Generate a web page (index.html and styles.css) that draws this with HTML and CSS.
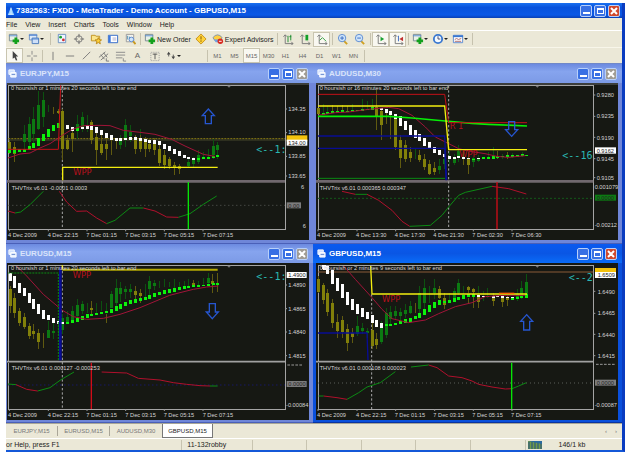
FILE: index.html
```html
<!DOCTYPE html>
<html lang="en">
<head>
<meta charset="utf-8">
<title>MetaTrader</title>
<link rel="stylesheet" href="styles.css">
</head>
<body>
<svg class="defs" aria-hidden="true">
  <symbol id="i-docplus" viewBox="0 0 13 13"><path d="M1.500 1.500h8v7h-8z" fill="#e8f0e8" stroke="#7a8a90"/><path d="M1 3h9" stroke="#5a8fd0"/><path d="M8.500 5v7M5 8.500h7" stroke="#13a01c" stroke-width="3"/></symbol>
  <symbol id="i-stack" viewBox="0 0 13 13"><path d="M1.500 1.500h8v6h-8z" fill="#dce8f8" stroke="#6a90c8"/><path d="M4.500 5.500h7v6h-7z" fill="#cfe0f8" stroke="#4a78b8"/><path d="M1 2.500h9M4 6.500h8" stroke="#4a80d0"/></symbol>
  <symbol id="i-cross" viewBox="0 0 13 13"><circle cx="6.500" cy="6.500" r="3.500" fill="none" stroke="#777"/><path d="M6.500 1v4M6.500 8v4M1 6.500h4M8 6.500h4" stroke="#666"/></symbol>
  <symbol id="i-win" viewBox="0 0 10 10"><path d="M1 1h6v5H1z" fill="#cfe0ff" stroke="#fff"/><path d="M3 4h6v5H3z" fill="#e8f0ff" stroke="#fff"/><path d="M4 6h4" stroke="#5a80c8"/></symbol>
  <symbol id="i-axes" viewBox="0 0 13 13"><path d="M3.500 2v9.500H12M1.500 4l2-2 2 2M10 9.500l2 2-2 1.500" fill="none" stroke="#777"/></symbol>
  <symbol id="i-lens" viewBox="0 0 13 13"><path d="M7 8l4 4" stroke="#d0a020" stroke-width="2"/><circle cx="5.500" cy="5.500" r="4" fill="#cfe4fa" stroke="#5a8ad0"/><path d="M3.500 5.500h4" stroke="#3568c0"/></symbol>
</svg>
<div class="app">
  <header class="titlebar">
    <svg class="logo" viewBox="0 0 10 12"><path d="M1 11L5 1l4 10z" fill="#8ecbff"/><path d="M5 2v8M2 10h6" stroke="#e8f6ff"/></svg>
    <h1>7382563: FXDD - MetaTrader - Demo Account - GBPUSD,M15</h1>
    <div class="controls">
      <button class="ctl" aria-label="Minimize"><i class="min"></i></button>
      <button class="ctl" aria-label="Maximize"><i class="max"></i></button>
      <button class="ctl close" aria-label="Close"><svg viewBox="0 0 8 8"><path d="M1 1l6 6M7 1L1 7"/></svg></button>
    </div>
  </header>
  <nav class="menu"><button>File</button><button>View</button><button>Insert</button><button>Charts</button><button>Tools</button><button>Window</button><button>Help</button></nav>
  <div class="bar main">
    <button class="tool drop" aria-label="New chart"><svg><use href="#i-docplus"/></svg></button>
    <button class="tool drop" aria-label="Profiles"><svg><use href="#i-stack"/></svg></button>
    <span class="sep wide"></span>
    <button class="tool" aria-label="Market watch"><svg viewBox="0 0 13 13"><path d="M2.500 1.500h8v9h-8z" fill="#eef4ff" stroke="#6a90c0"/><circle cx="5" cy="4.500" r="1.500" fill="#18a030"/><circle cx="8" cy="7.500" r="1.500" fill="#d03030"/></svg></button>
    <button class="tool" aria-label="Data window"><svg><use href="#i-cross"/></svg></button>
    <button class="tool" aria-label="Navigator"><svg viewBox="0 0 13 13"><path d="M1.500 2.500h4l1 1h4v5h-9z" fill="#fbe58a" stroke="#c09020"/><path d="M9 5l1 2.300 2.500.2-2 1.700.7 2.500L9 10.300 6.800 11.700l.7-2.500-2-1.700L8 7.300z" fill="#ffd23a" stroke="#b88718"/></svg></button>
    <button class="tool" aria-label="Terminal"><svg viewBox="0 0 13 13"><path d="M1.500 2.500h10v8h-10z" fill="#fff" stroke="#2c66c8"/><path d="M3 3v7" stroke="#3a78e0" stroke-width="2"/><path d="M6 5.500h4M6 7.500h4" stroke="#aac"/></svg></button>
    <button class="tool" aria-label="Strategy tester"><svg viewBox="0 0 13 13"><path d="M2.500 1.500h8v8h-8z" fill="#f4f4ee" stroke="#999"/><path d="M4 3v4M6 4v4" stroke="#48a"/><circle cx="8" cy="7" r="2.500" fill="#cfe4fa" stroke="#5a8ad0"/><path d="M10 9l2.500 3" stroke="#c89a20" stroke-width="2"/></svg></button>
    <span class="sep"></span>
    <button class="tool label"><svg><use href="#i-docplus"/></svg>New Order</button>
    <button class="tool" aria-label="MetaEditor"><svg viewBox="0 0 13 13"><path d="M6.500 1L12 6.500 6.500 12 1 6.500z" fill="#ffd23a" stroke="#c8921a"/><path d="M6.500 3.500V7M6.500 8v1.500" stroke="#7a5200"/></svg></button>
    <button class="tool label"><svg viewBox="0 0 13 13"><path d="M1 5q5-6 10 0l-2 3H3z" fill="#ffcf3f" stroke="#7a90b0"/><path d="M2 7h8v3H4z" fill="#6fa0e0"/><circle cx="9" cy="9" r="3" fill="#d82a20"/><path d="M7.500 9h3" stroke="#fff"/></svg>Expert Advisors</button>
    <span class="sep"></span>
    <button class="tool" aria-label="Bar chart"><svg viewBox="0 0 13 13"><use href="#i-axes"/><path d="M6.500 3v7M9.500 2v6M8 4h2" stroke="#188a2a"/></svg></button>
    <button class="tool" aria-label="Candlesticks"><svg viewBox="0 0 13 13"><use href="#i-axes"/><path d="M7 2h3v6H7z" fill="#12a028"/></svg></button>
    <button class="tool on" aria-label="Line chart"><svg viewBox="0 0 13 13"><use href="#i-axes"/><path d="M4 8l3-3 4 4" fill="none" stroke="#2a9a3a"/></svg></button>
    <span class="sep"></span>
    <button class="tool" aria-label="Zoom in"><svg viewBox="0 0 13 13"><use href="#i-lens"/><path d="M5.500 3.500v4" stroke="#3568c0"/></svg></button>
    <button class="tool" aria-label="Zoom out"><svg><use href="#i-lens"/></svg></button>
    <span class="sep"></span>
    <button class="tool on" aria-label="Auto scroll"><svg viewBox="0 0 13 13"><use href="#i-axes"/><path d="M6 4l4 2.500L6 9z" fill="#18a030"/></svg></button>
    <button class="tool on" aria-label="Chart shift"><svg viewBox="0 0 13 13"><use href="#i-axes"/><path d="M7 3v6" stroke="#3568c0"/><path d="M12 4L8 6.500 12 9z" fill="#c03030"/></svg></button>
    <span class="sep"></span>
    <button class="tool drop" aria-label="Indicators"><svg><use href="#i-docplus"/></svg></button>
    <button class="tool drop" aria-label="Periods"><svg viewBox="0 0 13 13"><circle cx="6.500" cy="6.500" r="4.500" fill="#f4faff" stroke="#3a78d0" stroke-width="2"/><path d="M6.500 3.500v3h2.500" fill="none" stroke="#446"/></svg></button>
    <button class="tool drop" aria-label="Templates"><svg viewBox="0 0 13 13"><path d="M1.500 2.500h10v8h-10z" fill="#fff" stroke="#5a8ad0"/><path d="M1 3.500h11" stroke="#3a78d0" stroke-width="2"/><path d="M3 7l2-1 2 1 3-1M3 9h7" fill="none" stroke="#a66"/></svg></button>
    <span class="sep"></span>
  </div>
  <div class="bar small">
    <button class="tool on" aria-label="Cursor"><svg viewBox="0 0 13 13"><path d="M4 1l6 6H7.500L9 11l-1.500.5L6 8 4 9.500z" fill="#444"/></svg></button>
    <button class="tool" aria-label="Crosshair"><svg viewBox="0 0 13 13"><path d="M6.500 1v4M6.500 8v4M1 6.500h4M8 6.500h4" stroke="#888"/></svg></button>
    <span class="sep"></span>
    <button class="tool" aria-label="Vertical line"><svg viewBox="0 0 13 13"><path d="M6.500 2v9" stroke="#777"/></svg></button>
    <button class="tool" aria-label="Horizontal line"><svg viewBox="0 0 13 13"><path d="M2 6.500h9" stroke="#777"/></svg></button>
    <button class="tool" aria-label="Trendline"><svg viewBox="0 0 13 13"><path d="M2 10l8-8" stroke="#777"/></svg></button>
    <button class="tool" aria-label="Channel"><svg viewBox="0 0 13 13"><path d="M1 8l7-6M3 11l8-7M3 5l4 5M6 3l4 5M9 9v3h3" fill="none" stroke="#777"/></svg></button>
    <button class="tool" aria-label="Fibonacci"><svg viewBox="0 0 13 13"><path d="M1 2.500h10M1 5.500h10M1 8.500h7M9 9v3h3" fill="none" stroke="#888"/></svg></button>
    <button class="tool letter" aria-label="Text">A</button>
    <button class="tool" aria-label="Label"><svg viewBox="0 0 13 13"><path d="M2 2.500h9v9H2z" fill="none" stroke="#999" stroke-dasharray="1 1"/><path d="M4 4.500h5M6.500 4v6" stroke="#555"/></svg></button>
    <button class="tool drop" aria-label="Arrows"><svg viewBox="0 0 13 13"><path d="M4 2l2 3H2zM9 10L7 7h4z" fill="#444"/><path d="M4 4v3M9 5v3" stroke="#555"/></svg></button>
    <span class="sep gap"></span>
    <button class="tool">M1</button><button class="tool">M5</button><button class="tool on">M15</button><button class="tool">M30</button><button class="tool">H1</button><button class="tool">H4</button><button class="tool">D1</button><button class="tool">W1</button><button class="tool">MN</button>
    <span class="sep"></span>
  </div>

  <main class="desk">
    <section class="win left">
      <header><svg class="wi"><use href="#i-win"/></svg><h2>EURJPY,M15</h2>
        <div class="controls"><button class="ctl" aria-label="Minimize"><i class="min"></i></button><button class="ctl" aria-label="Maximize"><i class="max"></i></button><button class="ctl close" aria-label="Close"><svg viewBox="0 0 8 8"><path d="M1 1l6 6M7 1L1 7"/></svg></button></div></header>
      <svg class="chart" viewBox="21 63 906 471">
        <path class="strip" d="M21 66H927"/>
        <path class="frame" d="M25 355V70H855V502H25V362"/>
        <path class="split" d="M21 358H855"/>
        <path class="dotg" d="M25 430H855"/>
        <path class="olv dash" d="M25 230H855"/><path class="olv thin" d="M25 234H855"/>
        <path class="vline" d="M187 72V502"/>
        <path class="wick gr" d="M72 190v72M87 165v90M101 135v110M116 88v117M130 90v105M145 130v20M232 160v70M247 150v60M261 160v50M362 220v40M377 170v85M391 190v50M420 200v50M566 290v24M581 285v30M595 265v42M610 270v22M625 262v30M640 232v58M653 240v50"/>
        <path class="wick ol" d="M28 235v40M43 240v60M160 135v20M174 140v15M188 140v155M203 220v45M217 200v70M275 175v70M290 200v110M304 220v60M319 225v70M333 230v50M348 230v30M406 220v55M420 220v50M435 225v60M449 230v40M464 228v52M478 250v62M493 265v55M508 285v35M522 300v38M537 305v30"/>
        <path class="body gr" d="M72 215v25M87 185v55M101 170v45M116 130v70M130 115v50M232 185v15M247 165v30M362 232v18M377 190v45M391 210v12M566 300v12M581 290v15M595 280v20M640 252v28M653 250v15"/>
        <path class="body ol" d="M28 240v30M43 255v20M174 146v6M188 147v113M203 235v27M217 212v20M275 180v55M290 225v40M304 245v27M319 245v17M406 235v25M420 238v24M435 240v22M449 245v15M464 240v25M478 262v40M493 278v30M508 290v22M522 308v10M537 312v8"/>
        <path class="body lime" d="M28 264v10M43 262v10M57 262v8M72 260v10M87 252v13M101 243v15M116 228v24M130 215v23M145 200v25M160 188v20M174 182v15M232 198v9M595 287v8M610 285v7M625 285v7M640 281v8M653 278v8"/>
        <path class="body wh" d="M203 188v12M217 195v13M247 194v7M261 190v10M275 190v14M290 195v18M304 205v15M319 213v15M333 220v15M348 227v9M362 229v7M377 227v6M391 226v7M406 225v8M420 228v8M435 230v9M449 233v10M464 235v12M478 238v12M493 245v17M508 253v15M522 260v15M537 268v14M552 278v9M566 284v7M581 288v7"/>
        <path class="ma" d="M24 288L60 276 90 273 120 258 150 245 187 220 215 203 250 191 300 190 330 191 370 205 420 211 465 217 515 232 555 252 610 277 645 283"/>
        <path class="red" d="M24 262H175L182 70"/>
        <path class="yel" d="M188 355V316H653"/>
        <text class="wpp" x="220" y="340">WPP</text>
        <path class="arrow" d="M625 141l18 20h-9v24h-18v-24h-9z"/>
        <text class="count" x="769" y="272">&lt;--1:</text>
        <path class="up" d="M45 453L62 450 90 428 130 388M320 485L345 475 390 438 430 438M535 466L570 455 610 427 650 402"/>
        <path class="dn" d="M24 447L45 453M178 388L200 420 230 448 260 447 290 468 320 485M430 438L465 447 500 465 535 466"/>
        <path class="bar-g" d="M565 360V502"/>
        <text x="33" y="85">0 hoursish or 1 minutes 20 seconds left to bar end</text>
        <text x="35" y="385">THVTrix v6.01 -0.0001 0.0003</text>
        <g class="axis"><path class="ylab" d="M860 220h62v18h-62z"/><path class="wlab" d="M860 233h62v18h-62z"/><path class="glab" d="M860 421h43v18h-43z"/>
        <text x="865" y="147">134.35</text><text x="865" y="217">134.10</text><text class="k" x="865" y="249">134.00</text><text x="865" y="289">133.85</text><text x="865" y="348">133.65</text><text x="903" y="380">6</text><text class="k" x="865" y="437">0.00</text><text x="908" y="497">6</text></g>
        <text x="24" y="525">4 Dec 2009</text><text x="143" y="525">4 Dec 22:15</text><text x="259" y="525">7 Dec 01:15</text><text x="376" y="525">7 Dec 03:15</text><text x="491" y="525">7 Dec 05:15</text><text x="608" y="525">7 Dec 07:15</text>
        <path class="tick" d="M855 141h6M855 212h6M855 283h6M855 342h6M28 502v6M145 502v6M261 502v6M377 502v6M493 502v6M609 502v6"/>
        <path class="mark" d="M681 71h12l-6 6z"/>
      </svg>
    </section>

    <section class="win right">
      <header><svg class="wi"><use href="#i-win"/></svg><h2>AUDUSD,M30</h2>
        <div class="controls"><button class="ctl" aria-label="Minimize"><i class="min"></i></button><button class="ctl" aria-label="Maximize"><i class="max"></i></button><button class="ctl close" aria-label="Close"><svg viewBox="0 0 8 8"><path d="M1 1l6 6M7 1L1 7"/></svg></button></div></header>
      <svg class="chart" viewBox="12 63 906 471">
        <path class="strip" d="M12 66H918"/>
        <path class="frame" d="M18 355V70H844V502H18V362"/>
        <path class="split" d="M12 358H844"/>
        <path class="dotg green" d="M18 409H844"/>
        <path class="vline" d="M410 72V502"/>
        <path class="wick gr" d="M33 125v30M47 132v20M120 125v22M150 112v30M165 118v25M180 110v30M309 262v30M382 290v45M397 265v55M412 270v35M426 275v35M440 250v50M484 285v30M499 280v20M528 270v22M543 255v36M572 275v16M602 272v16M631 270v14"/>
        <path class="wick ol" d="M62 130v20M77 132v18M91 130v18M106 132v16M193 85v120M208 140v95M222 150v35M236 150v80M250 160v105M265 220v98M280 235v65M295 255v45M323 265v35M338 275v50M353 295v45M368 300v40M455 265v45M469 270v65M557 268v22M587 270v20"/>
        <path class="body ol" d="M193 135v27M208 147v43M250 170v85M265 235v52M280 250v40M295 270v18M323 280v14M338 290v24M353 305v30M368 318v12M469 288v22M18 138v18"/>
        <path class="body gr" d="M382 312v13M397 290v16M426 290v14M440 266v18M484 288v11M499 287v10"/>
        <path class="body lime" d="M33 153v7M47 150v7M62 148v6M77 147v5M91 145v6M106 147v4M120 143v7M135 144v4M150 140v7M165 140v5M180 136v7M484 291v3M513 286v6M528 285v6M543 283v7M557 283v4M572 281v5M587 280v6M602 280v4M616 279v5M631 275v7M643 278v4"/>
        <path class="body wh" d="M208 138v7M222 141v11M236 147v13M250 157v15M265 163v29M280 177v26M295 190v28M309 203v25M323 215v23M338 228v24M353 240v22M368 255v17M382 265v15M397 275v10M412 283v7M426 285v5M440 283v5M455 285v6M469 287v5M499 288v4"/>
        <path class="ma" d="M18 160L70 152 110 150 170 142 230 136 260 140 300 160 340 195 370 225 400 240 440 260 480 269 519 275 554 283 589 286 640 281"/>
        <path class="gthin" d="M18 349H400"/>
        <path class="blue" d="M18 222H398L404 355M18 259H398L402 355"/>
        <path class="green-ma" d="M18 163H230L300 168 400 177 480 184 530 187 645 192"/>
        <path class="red" d="M18 97H398L410 182H645"/>
        <path class="yel" d="M18 132H398L410 263H645"/>
        <text class="wpp" x="413" y="201">R 1</text><text class="wpp" x="442" y="284">WPP</text>
        <path class="arrow" d="M599 223l18-20h-9v-24h-18v24h-9z"/>
        <text class="count" x="751" y="290">&lt;--16</text>
        <path class="up" d="M130 397H165M293 493L355 490 390 460 410 435 440 400 460 391 540 373"/>
        <path class="dn" d="M90 388L130 397M165 397L200 415 240 445 270 478 293 493M540 373L590 380 643 396"/>
        <path class="bar-r" d="M555 360V502"/>
        <text x="23" y="85">0 hoursish or 16 minutes 20 seconds left to bar end</text>
        <text x="23" y="384">THVTrix v6.01 0.000365 0.000347</text>
        <g class="axis"><path class="wlab" d="M849 256h63v19h-63z"/><path class="grlab" d="M849 398h63v18h-63z"/>
        <text x="854" y="105">0.9280</text><text x="854" y="169">0.9235</text><text x="854" y="233">0.9190</text><text class="k" x="854" y="272">0.9162</text><text x="854" y="297">0.9145</text><text x="854" y="354">0.9105</text><text x="848" y="380">0.001079</text><text class="k" x="854" y="413">0.0000</text><text x="848" y="495">-0.00212</text></g>
        <text x="15" y="525">4 Dec 2009</text><text x="132" y="525">4 Dec 13:30</text><text x="248" y="525">4 Dec 17:30</text><text x="364" y="525">4 Dec 21:30</text><text x="481" y="525">7 Dec 02:30</text><text x="597" y="525">7 Dec 06:30</text>
        <path class="tick" d="M844 99h6M844 163h6M844 226h6M844 290h6M844 347h6M18 502v6M135 502v6M251 502v6M368 502v6M484 502v6M600 502v6"/>
        <path class="mark" d="M670 71h12l-6 6z"/>
      </svg>
    </section>

    <section class="win left low">
      <header><svg class="wi"><use href="#i-win"/></svg><h2>EURUSD,M15</h2>
        <div class="controls"><button class="ctl" aria-label="Minimize"><i class="min"></i></button><button class="ctl" aria-label="Maximize"><i class="max"></i></button><button class="ctl close" aria-label="Close"><svg viewBox="0 0 8 8"><path d="M1 1l6 6M7 1L1 7"/></svg></button></div></header>
      <svg class="chart" viewBox="21 61 906 471">
        <path class="frame" d="M25 355V68H855V499H25V362"/>
        <path class="split light" d="M21 357H855"/>
        <path class="dotg navy" d="M25 427H855"/>
        <path class="vline" d="M187 72V499"/>
        <path class="wick gr" d="M145 235v50M160 240v50M174 235v40M188 215v60M203 205v40M217 190v45M232 170v55M247 175v38M261 180v30M290 180v30M304 175v30M319 180v26M333 145v50M348 110v80M362 118v60M377 130v40M391 125v40M435 125v45M449 100v60M464 112v30M478 115v20M493 110v22M508 118v16M522 110v25M537 118v16M552 115v17M566 110v22M595 115v14M610 105v25M625 92v36"/>
        <path class="wick ol" d="M30 130v80M43 150v75M57 195v55M72 210v50M87 240v50M101 245v45M116 260v60M130 270v45M275 175v40M319 215v25M406 130v50M420 140v40M580 112v20M637 95v55M653 92v56"/>
        <path class="body ol" d="M30 140v50M43 165v45M57 205v35M72 222v30M87 250v30M101 264v10M116 272v26M275 195v8M406 146v12M420 152v8M580 120v10M637 116v8M653 120v5"/>
        <path class="body gr" d="M145 262v23M160 265v7M188 225v37M203 222v18M217 205v30M232 187v33M247 185v20M333 155v40M348 135v45M362 135v20M377 140v9M391 138v9M449 115v25M464 122v9M625 106v14"/>
        <path class="body lime" d="M203 237v7M217 233v8M232 227v10M247 220v12M261 215v11M275 213v7M290 211v6M304 209v6M319 205v7M333 200v10M348 190v15M362 185v15M377 177v13M391 173v12M406 170v10M420 167v8M435 162v11M449 157v13M464 152v11M478 147v11M493 143v10M508 140v10M522 137v10M537 133v10M552 131v9M566 130v7M581 128v6M595 127v5M610 126v5M625 124v6M640 122v6M653 120v7"/>
        <path class="body wh" d="M30 90v25M43 100v35M57 122v28M72 137v23M87 152v28M101 170v28M116 185v30M130 203v25M145 218v14M160 227v13M174 235v8M188 237v7"/>
        <path class="ma" d="M50 70L80 100 130 155 187 203 220 222 260 230 310 227 360 215 420 195 480 170 509 158 540 150 580 140 620 133 655 130"/>
        <path class="gthin dash" d="M25 91H175V352"/>
        <path class="blue wide" d="M181 72V353"/>
        <path class="yel" d="M187 68V81"/><path class="gold" d="M187 81H653"/>
        <text class="wpp" x="218" y="106">WPP</text>
        <path class="arrow" d="M637 228l18-20h-9v-25h-18v25h-9z"/>
        <text class="count" x="769" y="112">&lt;--1:</text>
        <path class="up" d="M24 424L48 426M113 445L150 435 180 413 222 388M630 430H653"/>
        <path class="dn" d="M48 426L80 440 113 445M305 388L380 391 415 407 480 412 520 420 560 425 600 429 630 430"/>
        <path class="bar-r" d="M274 360V499"/>
        <text x="33" y="83">0 hoursish or 1 minutes 20 seconds left to bar end</text>
        <text x="35" y="383">THVTrix v6.01 0.000127 -0.000253</text>
        <g class="axis"><path class="wlab" d="M860 88h60v18h-60z"/><path class="glab" d="M860 415h60v18h-60z"/>
        <text class="k" x="865" y="104">1.4900</text><text x="865" y="134">1.4890</text><text x="865" y="205">1.4865</text><text x="865" y="275">1.4840</text><text x="865" y="346">1.4815</text><text class="k" x="865" y="431">0.0000</text><text x="858" y="494">-0.00084</text></g>
        <text x="24" y="523">4 Dec 2009</text><text x="143" y="523">4 Dec 22:15</text><text x="259" y="523">7 Dec 01:15</text><text x="376" y="523">7 Dec 03:15</text><text x="491" y="523">7 Dec 05:15</text><text x="608" y="523">7 Dec 07:15</text>
        <path class="tick" d="M855 127h6M855 198h6M855 268h6M855 339h6M28 499v6M145 499v6M261 499v6M377 499v6M493 499v6M609 499v6M862 367h8M874 367h8M886 367h8M898 367h8"/>
        <path class="mark" d="M681 69h12l-6 6z"/>
      </svg>
    </section>

    <section class="win right low active">
      <header><svg class="wi"><use href="#i-win"/></svg><h2>GBPUSD,M15</h2>
        <div class="controls"><button class="ctl" aria-label="Minimize"><i class="min"></i></button><button class="ctl" aria-label="Maximize"><i class="max"></i></button><button class="ctl close" aria-label="Close"><svg viewBox="0 0 8 8"><path d="M1 1l6 6M7 1L1 7"/></svg></button></div></header>
      <svg class="chart" viewBox="12 61 906 471">
        <path class="frame" d="M18 355V68H844V499H18V362"/>
        <path class="split light" d="M12 357H844"/>
        <path class="dotg" d="M18 421H844"/>
        <path class="brown" d="M18 88H844"/>
        <path class="vline" d="M179 155V499"/>
        <path class="wick gr" d="M135 220v60M150 240v35M165 255v30M208 235v70M222 195v90M236 190v60M250 190v40M265 195v40M280 185v40M295 175v40M323 130v80M338 110v90M353 130v50M368 110v60M412 150v30M426 135v40M440 108v50M455 130v25M499 130v30M513 145v30M527 137v30M616 140v35M629 115v55M644 95v70"/>
        <path class="wick ol" d="M18 100v50M33 120v65M47 140v80M62 170v85M77 215v70M91 220v65M106 245v80M120 255v45M180 240v80M193 270v50M309 180v30M382 130v40M397 150v50M469 130v20M469 165v15M484 135v60M499 165v30M543 150v40M572 160v34M587 160v30"/>
        <path class="body ol" d="M18 110v38M33 128v45M47 150v58M62 182v60M77 237v28M91 232v36M106 258v44M120 272v10M180 263v47M193 288v20M382 140v25M397 165v22M469 134v8M484 138v10M499 163v14M543 160v14M572 163v16M587 163v10"/>
        <path class="body gr" d="M135 250v25M150 255v10M165 265v7M208 245v52M222 212v66M236 207v23M250 205v15M265 207v14M280 203v12M295 190v20M323 150v50M338 135v45M368 135v15M426 145v20M440 120v30M616 155v14M629 135v27M644 118v47"/>
        <path class="body lime" d="M222 245v6M236 243v6M250 240v6M265 235v10M280 230v10M295 225v12M309 220v10M323 210v15M338 200v17M353 187v20M368 178v19M382 173v14M397 174v8M412 173v7M426 167v10M440 163v10M455 158v10M469 154v10M484 153v10M602 166v6M616 164v6M629 161v6M644 154v11"/>
        <path class="body wh" d="M33 68v12M38 68v14M47 70v25M62 83v40M77 105v40M91 125v40M106 147v41M120 168v35M135 185v28M150 195v27M165 207v23M180 218v24M193 232v20M208 240v15M499 158v5M513 159v4M527 159v5M543 159v6M557 160v4M572 160v6M587 162v5M602 162v4"/>
        <path class="ma" d="M95 70L130 110 180 165 210 200 240 228 290 240 340 232 380 213 430 192 480 180 520 162 570 158 640 158"/>
        <path class="blue" d="M18 271H165L168 352"/>
        <path class="yel" d="M176 70L180 154H645"/><path class="orange" d="M561 152H607"/>
        <text class="wpp" x="210" y="177">WPP</text>
        <path class="arrow" d="M644 216l18 20h-9v26h-18v-26h-9z"/>
        <text class="count" x="770" y="114">&lt;--2</text>
        <path class="up" d="M20 460H35M105 470L140 450 165 433 205 420 250 387M297 373L350 367M600 438L620 430 643 420"/>
        <path class="dn" d="M35 460L75 465 105 470M350 367L375 375 410 400 450 405 480 415 500 425 540 433 580 439 600 438"/>
        <path class="bar-g" d="M599 360V499"/>
        <text x="23" y="83">0 hoursish or 2 minutes 9 seconds left to bar end</text>
        <text x="23" y="382">THVTrix v6.01 0.000108 0.000023</text>
        <g class="axis"><path class="ylab" d="M849 76h63v14h-63z"/><path class="wlab" d="M849 88h63v18h-63z"/><path class="glab" d="M849 411h63v18h-63z"/>
        <text class="k" x="857" y="103">1.6509</text><text x="857" y="153">1.6490</text><text x="857" y="218">1.6465</text><text x="857" y="282">1.6440</text><text x="857" y="346">1.6415</text><text class="k" x="854" y="427">0.0000</text><text x="848" y="494">-0.00087</text></g>
        <text x="15" y="523">4 Dec 2009</text><text x="132" y="523">4 Dec 22:15</text><text x="248" y="523">7 Dec 01:15</text><text x="364" y="523">7 Dec 03:15</text><text x="481" y="523">7 Dec 05:15</text><text x="597" y="523">7 Dec 07:15</text>
        <path class="tick" d="M844 146h6M844 212h6M844 275h6M844 339h6M18 499v6M135 499v6M251 499v6M368 499v6M484 499v6M600 499v6M852 365h8M864 365h8M876 365h8M888 365h8M900 365h8"/>
        <path class="mark" d="M670 69h12l-6 6z"/>
      </svg>
    </section>
  </main>

  <nav class="tabs"><button>EURJPY,M15</button><button>EURUSD,M15</button><button>AUDUSD,M30</button><button class="sel">GBPUSD,M15</button>
    <span class="arrows"><button aria-label="Previous">‹</button><button aria-label="Next">›</button></span></nav>
  <footer class="status"><span class="help">or Help, press F1</span><span class="profile">11-132robby</span><span class="cell"></span><span class="cell"></span><span class="cell"></span><span class="cell"></span><span class="cell"></span>
    <span class="net"><svg viewBox="0 0 14 8"><path d="M0 0h14v8H0z" fill="#6f9a4a"/><path d="M1 1v7M4 1v7M7 1v7M10 1v7M13 1v7" stroke="#234a8a"/><path d="M0 0l14 0v3z" fill="#2a6aa0"/></svg>146/1 kb</span></footer>
</div>
</body>
</html>
```
FILE: styles.css
```css
* { box-sizing: border-box; }
body { margin: 0; background: #fff; font-family: "Liberation Sans", Arial, sans-serif; font-size: 7px; color: #222; }
button { font: inherit; color: inherit; background: none; border: 0; padding: 0; margin: 0; }
h1, h2 { margin: 0; font-size: 8px; font-weight: bold; white-space: nowrap; }
.defs { display: none; }
.app { margin: 3px 0 0 6px; background: #ebe8d7; border-right: 3px solid #0a3cc0; border-bottom: 2px solid #1458d8; }

.titlebar { display: flex; align-items: center; height: 15px; padding: 0 2px 0 1px; gap: 1px; color: #fff; background: linear-gradient(#1a70f0, #0852dc 30%, #0a58e6 80%, #0a40b4); }
.logo { width: 8px; height: 10px; }
.controls { display: flex; gap: 2px; margin-left: auto; }
.ctl { display: grid; place-items: center; width: 12px; height: 12px; border: 1px solid #b8d0fa; border-radius: 2px; background: #3870e4; }
.ctl i { display: block; width: 7px; height: 6px; }
.min { border-bottom: 2px solid #fff; }
.max { border: 1px solid #fff; border-top-width: 2px; }
.ctl svg { width: 8px; height: 8px; stroke: #fff; stroke-width: 2; }
.ctl.close { background: #d0482c; }

.menu { display: flex; gap: 8px; height: 13px; align-items: center; border-bottom: 1px solid #fff; }
.bar { display: flex; align-items: center; height: 17px; border-bottom: 1px solid #f8f6ea; }
.bar.small { height: 15px; border-bottom: 0; color: #666; }
.tool { display: flex; align-items: center; justify-content: center; flex: none; width: 17px; height: 15px; font-size: 6px; }
.tool svg { width: 12px; height: 12px; flex: none; }
.tool.letter { font-size: 8px; }
.tool.label { width: auto; gap: 1px; padding: 0 2px; font-size: 7px; }
.tool.on { background: #f9f8f1; border: 1px solid #c9c5b0; }
.tool.drop { width: 20px; }
.tool.drop::after { content: ""; border: 2px solid transparent; border-top-color: #222; border-bottom: 0; }
.sep { width: 1px; height: 12px; margin: 0 1px 0 2px; background: #c6c2ae; }
.sep.wide { margin: 0 2px 0 4px; }
.sep.gap { margin-left: 24px; }

.desk { display: grid; grid-template-columns: 307fr 309fr; border-top: 1px solid #7088c8; background: #7088c8; }
.win { background: #6f86d8; padding-bottom: 3px; border-bottom: 1px solid #4a60b8; }
.win header { display: flex; align-items: center; gap: 3px; height: 19px; color: #d9e3fa; background: linear-gradient(#6c8ae0, #86a4ee 40%, #7c9ae6); }
.win.left { padding-left: 1px; padding-right: 4px; }
.win.right { padding-left: 3px; padding-right: 4px; }
.win.low { padding-bottom: 2px; }
.win.left header { margin: 0 -4px 0 -1px; padding: 0 5px 0 2px; }
.win.right header { margin: 0 -4px 0 -3px; padding: 0 5px 0 4px; }
.wi { width: 9px; height: 9px; }
.win .close { background: #a09c94; }
.win.active { background: #0a50dc; border-bottom-color: #0a34a0; }
.win.active header { color: #fff; background: linear-gradient(#0a5af0, #0a56e4 50%, #0a6cf8); }
.win.active .close { background: #d0482c; }

.chart { display: block; width: 100%; height: auto; background: #161813; }
.chart text { font-size: 17px; fill: #d6d6d6; }
.chart .k { fill: #222; }
.chart .wpp { font-family: "DejaVu Sans", sans-serif; font-size: 25px; fill: #b8101c; }
.chart .count { font-family: "DejaVu Sans Mono", monospace; font-size: 30px; fill: #2ab8b4; }
.chart path { fill: none; }
.strip { stroke: #3c3e3c; stroke-width: 6; }
.frame { stroke: #a4a4a4; stroke-width: 3; shape-rendering: crispEdges; }
.split { stroke: #70686e; stroke-width: 8; }
.split.light { stroke: #a0a0a0; stroke-width: 5; }
.tick { stroke: #999; stroke-width: 3; }
.dotg { stroke: #5a5e5a; stroke-width: 3; stroke-dasharray: 3 9; }
.dotg.green { stroke: #14581a; stroke-dasharray: 6 6; }
.dotg.navy { stroke: #1a1a90; }
.olv { stroke: #8a7c14; stroke-width: 3; }
.dash { stroke-dasharray: 6 3; }
.thin { stroke: #5e5e3a; stroke-width: 2; }
.vline { stroke: #a8a8a8; stroke-width: 3; stroke-dasharray: 7 6; }
.wick { stroke-width: 3; shape-rendering: crispEdges; }
.body { stroke-width: 9; shape-rendering: crispEdges; }
.gr { stroke: #0c7a12; }
.wick.gr { stroke: #0c5210; }
.ol { stroke: #82800a; }
.wick.ol { stroke: #605a10; }
.lime { stroke: #0cf20c; }
.wh { stroke: #fff; }
.ma { stroke: #a01438; stroke-width: 3; }
.red { stroke: #c41018; stroke-width: 3; }
.yel { stroke: #f4ee10; stroke-width: 4; }
.gold { stroke: #b4a804; stroke-width: 6; }
.orange { stroke: #ff6a00; stroke-width: 4; }
.brown { stroke: #8a5a38; stroke-width: 3; }
.blue { stroke: #080c94; stroke-width: 4; }
.blue.wide { stroke-width: 8; }
.gthin { stroke: #0a8a14; stroke-width: 3; }
.green-ma { stroke: #06f006; stroke-width: 5; }
.arrow { stroke: #2656d0; stroke-width: 4; }
.up { stroke: #0c8a14; stroke-width: 3; }
.dn { stroke: #b0102c; stroke-width: 3; }
.bar-g { stroke: #06e406; stroke-width: 4; }
.bar-r { stroke: #d00c18; stroke-width: 4; }
.chart .wlab { fill: #fff; }
.chart .ylab { fill: #f4c20c; }
.chart .glab { fill: #7c7c7c; }
.chart .grlab { fill: #0c7a12; }
.chart .mark { fill: #777; }

.tabs { display: flex; align-items: center; height: 15px; padding: 0 2px 0 0; border-top: 1px solid #a8a698; color: #777; font-size: 6px; }
.tabs > button { width: 52px; height: 10px; border-right: 1px solid #aaa698; }
.tabs .sel { width: 51px; height: 14px; background: #fff; color: #222; border: 1px solid #777; border-top: 0; }
.tabs > button:nth-child(3) { border-right: 0; }
.arrows { display: flex; gap: 8px; margin-left: auto; padding-right: 3px; }
.status { display: flex; align-items: center; height: 12px; border-top: 1px solid #fff; }
.status span { height: 10px; line-height: 10px; border-right: 1px solid #c8c4b0; }
.help { flex: 180; }
.profile { flex: 66; padding-left: 5px; }
.cell { flex: 55; }
.status .net { display: flex; align-items: center; gap: 17px; flex: 97; padding-left: 2px; border: 0; }
.net svg { width: 14px; height: 8px; }
```
